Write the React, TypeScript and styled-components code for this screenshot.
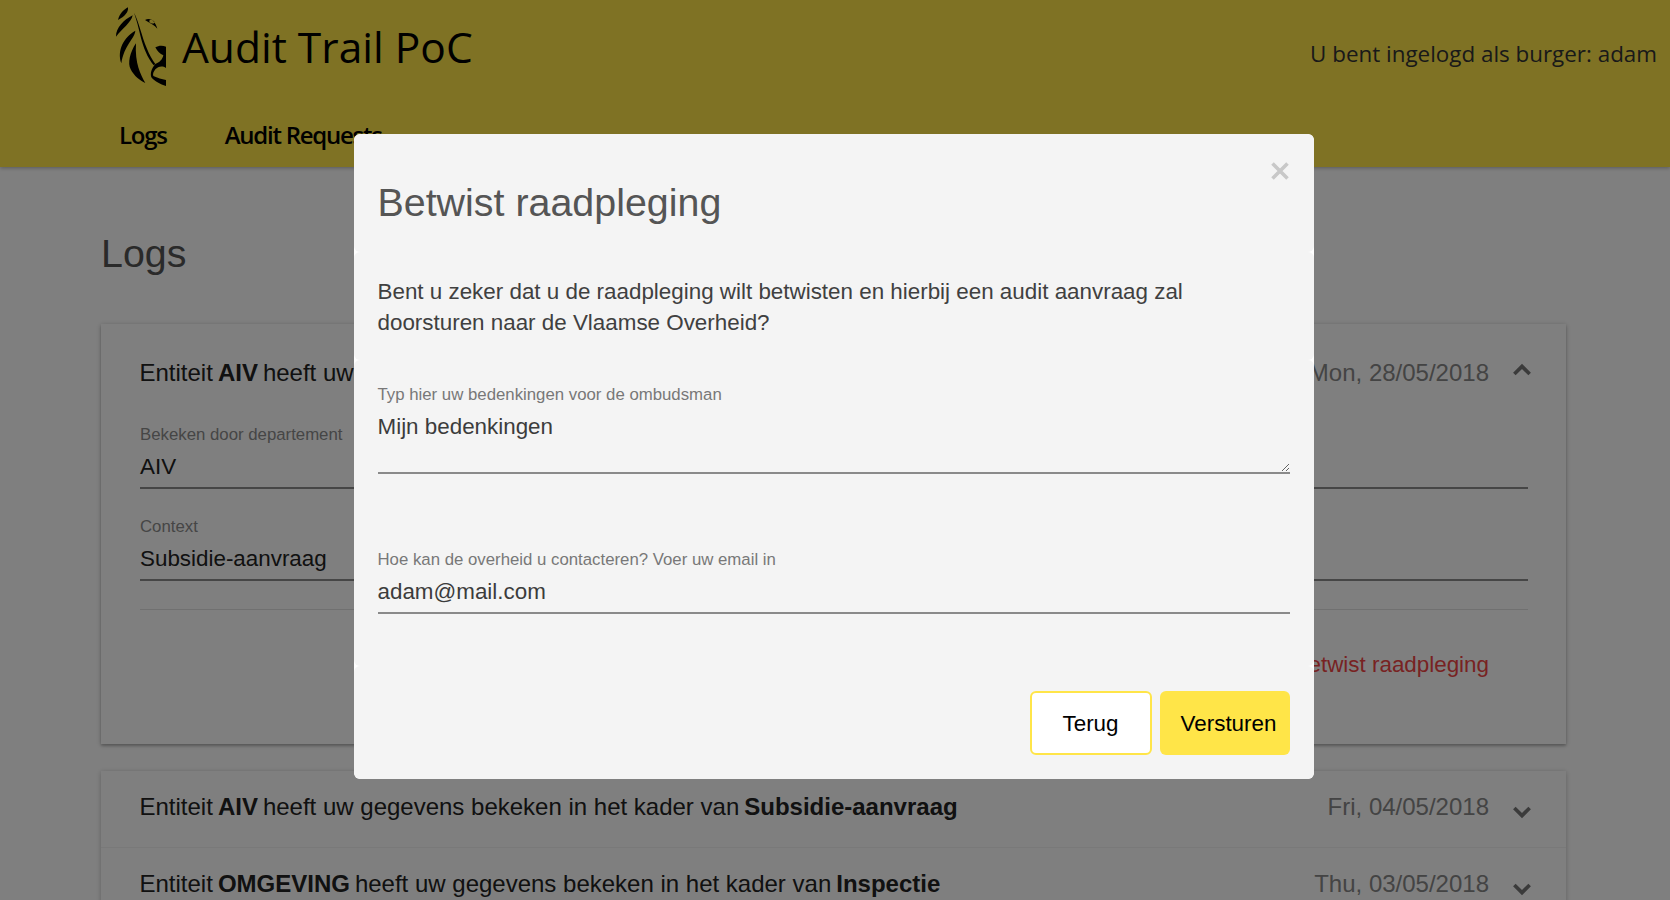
import styled, { createGlobalStyle } from "styled-components";

const GlobalStyle = createGlobalStyle`
  html, body {
    margin: 0;
    height: 100%;
    overflow: hidden;
    background: #fff;
    font-family: "Liberation Sans", Arial, sans-serif;
  }
  * { box-sizing: border-box; }
`;

const LionLogo = () => (
  <svg width="60" height="90" viewBox="0 0 180 270" fill="#000">
    <path d="M24 60 C28 42 40 30 54 22 C56 36 44 50 24 60 Z" />
    <path d="M18 110 C18 84 40 60 68 46 C64 68 36 86 18 110 Z" />
    <path d="M34 190 C20 150 42 112 76 92 C74 116 42 136 34 190 Z" />
    <path d="M78 130 C60 156 52 190 62 208 C72 228 90 242 106 249 C92 224 74 190 78 130 Z" />
    <path d="M72 38 C86 62 96 112 110 144 C118 164 126 178 136 192 L131 196 C112 172 100 142 92 110 C86 84 80 60 72 38 Z" />
    <path d="M136 192 C148 188 158 178 160 166 C150 162 142 154 136 142 C146 136 158 136 168 140 L168 204 C156 196 144 200 136 208 C130 216 128 222 130 228 C142 234 156 238 168 240 L168 258 C150 252 136 246 124 232 C120 220 124 206 136 192 Z" />
    <path d="M105 60 C118 52 134 58 142 86 C134 76 120 70 105 60 Z M118 62 a8 5 20 1 0 15 6 a8 5 20 1 0 -15 -6 Z" fillRule="evenodd" />
  </svg>
);

const Chevron = ({ up }: { up?: boolean }) => (
  <ChevronIcon viewBox="0 0 24 24" $up={up}>
    <path d="M6.9 9.3 12 14.4 17.1 9.3" />
  </ChevronIcon>
);

const rows = [
  { entity: "AIV", context: "Subsidie-aanvraag", date: "Fri, 04/05/2018" },
  { entity: "OMGEVING", context: "Inspectie", date: "Thu, 03/05/2018" },
];

const App = () => {
  return (
    <>
      <GlobalStyle />
      <Header>
        <HeaderTop>
          <Brand>
            <LionLogo />
            <BrandTitle>Audit Trail PoC</BrandTitle>
          </Brand>
          <LoginInfo>U bent ingelogd als burger: adam</LoginInfo>
        </HeaderTop>
        <Nav>
          <NavLink>Logs</NavLink>
          <NavLink>Audit Requests</NavLink>
        </Nav>
      </Header>
      <Main>
        <PageTitle>Logs</PageTitle>
        <ExpandedCard>
          <Summary>
            <SummaryText>
              Entiteit<b>AIV</b>heeft uw gegevens bekeken in het kader van<b>Subsidie-aanvraag</b>
            </SummaryText>
            <DateText>Mon, 28/05/2018</DateText>
            <Chevron up />
          </Summary>
          <Details>
            <Field>
              <FieldLabel>Bekeken door departement</FieldLabel>
              <FieldValue>AIV</FieldValue>
            </Field>
            <Field>
              <FieldLabel>Context</FieldLabel>
              <FieldValue>Subsidie-aanvraag</FieldValue>
            </Field>
            <Divider />
            <Actions>
              <DisputeLink>Betwist raadpleging</DisputeLink>
            </Actions>
          </Details>
        </ExpandedCard>
        <RowCard>
          {rows.map((row) => (
            <Summary key={row.date} $compact>
              <SummaryText>
                Entiteit<b>{row.entity}</b>heeft uw gegevens bekeken in het kader van<b>{row.context}</b>
              </SummaryText>
              <DateText>{row.date}</DateText>
              <Chevron />
            </Summary>
          ))}
        </RowCard>
      </Main>
      <Overlay>
        <Modal>
          <ModalHeader>
            <ModalTitle>Betwist raadpleging</ModalTitle>
            <CloseButton>
              <svg width="20" height="20" viewBox="0 0 20 20">
                <path d="M2.5 2.5 17.5 17.5 M17.5 2.5 2.5 17.5" stroke="#c8c8c8" strokeWidth="3.6" fill="none" />
              </svg>
            </CloseButton>
          </ModalHeader>
          <ModalSection>
            <ModalText>
              Bent u zeker dat u de raadpleging wilt betwisten en hierbij een audit aanvraag zal
              doorsturen naar de Vlaamse Overheid?
            </ModalText>
          </ModalSection>
          <FormSection>
            <FormField>
              <FormLabel>Typ hier uw bedenkingen voor de ombudsman</FormLabel>
              <TextArea defaultValue="Mijn bedenkingen" readOnly />
            </FormField>
            <FormField>
              <FormLabel>Hoe kan de overheid u contacteren? Voer uw email in</FormLabel>
              <TextInput defaultValue="adam@mail.com" readOnly />
            </FormField>
          </FormSection>
          <ModalFooter>
            <OutlineButton>Terug</OutlineButton>
            <PrimaryButton>Versturen</PrimaryButton>
          </ModalFooter>
        </Modal>
      </Overlay>
    </>
  );
};

export default App;

const Header = styled.header`
  height: 167px;
  background: #ffe548;
  padding: 0 13px 0 110px;
  display: flex;
  flex-direction: column;
  font-family: "Open Sans", sans-serif;
  color: #000;
  box-shadow: 0 1px 4px rgba(0, 0, 0, 0.3);
`;

const HeaderTop = styled.div`
  display: flex;
  align-items: flex-start;
  justify-content: space-between;
  height: 120px;
`;

const Brand = styled.div`
  display: flex;
  align-items: flex-start;
  gap: 12px;
`;

const BrandTitle = styled.span`
  font-size: 42.5px;
  line-height: 84px;
  margin-top: 5px;
`;

const LoginInfo = styled.span`
  font-size: 22.4px;
  line-height: 30px;
  margin-top: 39px;
  color: #333;
`;

const Nav = styled.nav`
  display: flex;
  gap: 58px;
  padding-left: 9px;
`;

const NavLink = styled.a`
  font-size: 24px;
  font-weight: 600;
  letter-spacing: -1.25px;
  line-height: 30px;
`;

const Main = styled.main`
  padding: 0 104px 0 101px;
`;

const PageTitle = styled.h1`
  margin: 0;
  padding-top: 63px;
  font-size: 39.4px;
  font-weight: 400;
  line-height: 46px;
  height: 157px;
  color: #555;
`;

const ExpandedCard = styled.section`
  height: 420px;
  background: #fff;
  box-shadow: 0 1px 5px rgba(0, 0, 0, 0.25), 0 2px 2px rgba(0, 0, 0, 0.16);
  margin-bottom: 27px;
`;

const RowCard = styled.section`
  background: #fff;
  box-shadow: 0 1px 5px rgba(0, 0, 0, 0.25);
`;

const Summary = styled.div<{ $compact?: boolean }>`
  display: flex;
  align-items: center;
  height: ${(p) => (p.$compact ? "77px" : "96px")};
  padding: ${(p) => (p.$compact ? "0 26px 4px 38.5px" : "2px 26px 0 38.5px")};
  font-size: 24px;
  border-bottom: ${(p) => (p.$compact ? "1px solid #f2f2f2" : "none")};
`;

const SummaryText = styled.div`
  flex: 1;
  color: #222;
  white-space: nowrap;

  b {
    margin: 0 5px;
  }
`;

const DateText = styled.span`
  color: #888;
  margin-right: 15px;
`;

const ChevronIcon = styled.svg<{ $up?: boolean }>`
  width: 36px;
  height: 36px;
  fill: none;
  stroke: #777;
  stroke-width: 2.4;
  margin-top: ${(p) => (p.$up ? "-6px" : "9px")};
  transform: ${(p) => (p.$up ? "rotate(180deg)" : "none")};
`;

const Details = styled.div`
  padding: 0 38px 0 39px;
`;

const Field = styled.div`
  height: 92px;
  display: flex;
  flex-direction: column;
  padding-top: 3px;
`;

const FieldLabel = styled.label`
  font-size: 16.8px;
  line-height: 24px;
  margin-bottom: 4px;
  color: #8c8c8c;
`;

const FieldValue = styled.div`
  font-size: 22.4px;
  line-height: 32px;
  color: #222;
  height: 38px;
  border-bottom: 2px solid #8c8c8c;
`;

const Divider = styled.div`
  height: 1px;
  background: #e0e0e0;
  margin-top: 5px;
`;

const Actions = styled.div`
  display: flex;
  justify-content: flex-end;
  padding: 42px 39px 0 0;
`;

const DisputeLink = styled.a`
  font-size: 22.4px;
  color: #f04545;
`;

const Overlay = styled.div`
  position: fixed;
  inset: 0;
  background: rgba(0, 0, 0, 0.5);
  display: flex;
  justify-content: center;
  align-items: flex-start;
  padding: 134px 3px 0 0;
`;

const Modal = styled.div`
  width: 960px;
  height: 645px;
  background: #fff;
  border-radius: 6px;
  display: flex;
  flex-direction: column;
  overflow: hidden;
`;

const ModalSectionBase = styled.div`
  background: #f4f4f4;
  border-radius: 6px;
  padding: 0 24px;
`;

const ModalHeader = styled(ModalSectionBase)`
  position: relative;
  height: 118px;
  padding-top: 45px;
`;

const ModalTitle = styled.h2`
  margin: 0;
  font-size: 39.4px;
  font-weight: 400;
  line-height: 46px;
  color: #555;
`;

const CloseButton = styled.button`
  position: absolute;
  top: 27px;
  right: 24px;
  width: 20px;
  height: 20px;
  padding: 0;
  border: none;
  background: none;
  display: flex;
  align-items: center;
  justify-content: center;
`;

const ModalSection = styled(ModalSectionBase)`
  height: 108px;
  padding-top: 24px;
`;

const ModalText = styled.p`
  margin: 0;
  font-size: 22.4px;
  line-height: 31px;
  color: #404040;
`;

const FormSection = styled(ModalSectionBase)`
  height: 306px;
  padding-top: 23px;
  display: flex;
  flex-direction: column;
  gap: 74px;
`;

const FormField = styled.div`
  display: flex;
  flex-direction: column;
`;

const FormLabel = styled.label`
  font-size: 16.8px;
  line-height: 24px;
  color: #787878;
`;

const TextArea = styled.textarea`
  display: block;
  height: 67px;
  margin: 0;
  padding: 4px 0 0;
  background: transparent;
  border: none;
  border-bottom: 2px solid #8a8a8a;
  outline: none;
  resize: vertical;
  font-family: inherit;
  font-size: 22.4px;
  line-height: 32px;
  color: #3c3c3c;
`;

const TextInput = styled.input`
  display: block;
  height: 42px;
  margin: 0;
  padding: 0;
  background: transparent;
  border: none;
  border-bottom: 2px solid #8a8a8a;
  outline: none;
  font-family: inherit;
  font-size: 22.4px;
  color: #3c3c3c;
`;

const ModalFooter = styled(ModalSectionBase)`
  flex: 1;
  display: flex;
  justify-content: flex-end;
  gap: 8px;
  padding-top: 25px;
`;

const ButtonBase = styled.button`
  height: 64px;
  padding: 2px 0 0;
  border-radius: 6px;
  font-family: inherit;
  font-size: 22.4px;
  color: #000;
`;

const OutlineButton = styled(ButtonBase)`
  width: 122px;
  background: #fff;
  border: 2px solid #ffe548;
`;

const PrimaryButton = styled(ButtonBase)`
  width: 130px;
  padding-left: 8px;
  background: #ffe548;
  border: none;
`;
